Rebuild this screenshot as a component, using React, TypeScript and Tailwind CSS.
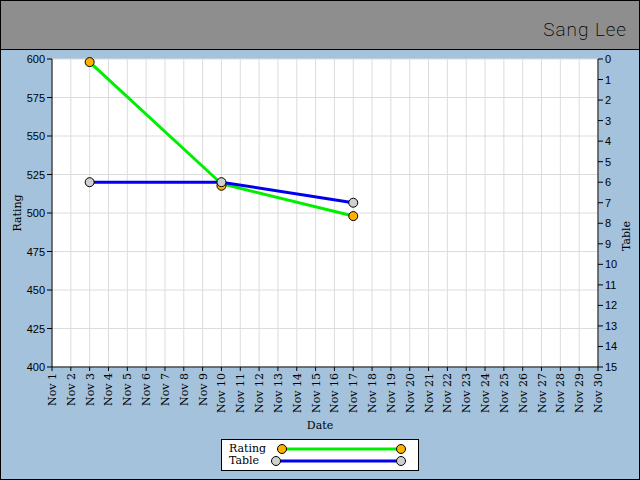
import React from "react";

const X0 = 52;
const X1 = 598;
const Y0 = 59;
const Y1 = 367;
const days = Array.from({ length: 30 }, (_, i) => i + 1);
const dx = (X1 - X0) / 29;
const xOf = (d: number) => X0 + (d - 1) * dx;
const yRating = (r: number) => Y0 + (600 - r) * ((Y1 - Y0) / 200);
const yTable = (t: number) => Y0 + t * ((Y1 - Y0) / 15);

const rating = [
  { d: 3, v: 598 },
  { d: 10, v: 519 },
  { d: 17, v: 498 },
];
const table = [
  { d: 3, v: 6 },
  { d: 10, v: 6 },
  { d: 17, v: 7 },
];

function Chart() {
  const ratingTicks = [600, 575, 550, 525, 500, 475, 450, 425, 400];
  const tableTicks = Array.from({ length: 16 }, (_, i) => i);
  return (
    <svg width={638} height={430} viewBox="1 50 638 430" className="block">
      <rect x={X0} y={Y0} width={X1 - X0} height={Y1 - Y0} fill="#fff" />
      {days.map((d) => (
        <line key={d} x1={xOf(d)} x2={xOf(d)} y1={Y0} y2={Y1} stroke="#dcdcdc" />
      ))}
      {ratingTicks.map((r) => (
        <line key={r} x1={X0} x2={X1} y1={yRating(r)} y2={yRating(r)} stroke="#dcdcdc" />
      ))}
      <line x1={X0} x2={X0} y1={Y0} y2={Y1} stroke="#000" />
      <line x1={X1} x2={X1} y1={Y0} y2={Y1} stroke="#000" />
      <line x1={X0} x2={X1} y1={Y1} y2={Y1} stroke="#000" />
      <g fontFamily="'Liberation Sans', sans-serif" fontSize={11} fill="#000">
        {ratingTicks.map((r) => (
          <g key={r}>
            <line x1={X0 - 5} x2={X0} y1={yRating(r)} y2={yRating(r)} stroke="#000" />
            <text x={X0 - 7} y={yRating(r) + 4} textAnchor="end">{r}</text>
          </g>
        ))}
        {tableTicks.map((t) => (
          <g key={t}>
            <line x1={X1} x2={X1 + 5} y1={yTable(t)} y2={yTable(t)} stroke="#000" />
            <text x={X1 + 7} y={yTable(t) + 4}>{t}</text>
          </g>
        ))}
      </g>
      <g fontFamily="'DejaVu Serif', serif" fontSize={11} fill="#000">
        {days.map((d) => (
          <g key={d}>
            <line x1={xOf(d)} x2={xOf(d)} y1={Y1} y2={Y1 + 4} stroke="#000" />
            <text
              transform={`translate(${xOf(d) + 4} ${Y1 + 6}) rotate(-90)`}
              textAnchor="end"
            >
              Nov {d}
            </text>
          </g>
        ))}
        <text x={320} y={429} textAnchor="middle">Date</text>
        <text transform="translate(21 213) rotate(-90)" textAnchor="middle">Rating</text>
        <text transform="translate(630 236) rotate(-90)" textAnchor="middle">Table</text>
      </g>
      <polyline
        points={rating.map((p) => `${xOf(p.d)},${yRating(p.v)}`).join(" ")}
        fill="none"
        stroke="#00ee00"
        strokeWidth={3}
      />
      <polyline
        points={table.map((p) => `${xOf(p.d)},${yTable(p.v)}`).join(" ")}
        fill="none"
        stroke="#0000ee"
        strokeWidth={3}
      />
      {rating.map((p) => (
        <circle key={p.d} cx={xOf(p.d)} cy={yRating(p.v) + (p.d === 10 ? 2 : 0)} r={4.5} fill="#ffb000" stroke="#000" />
      ))}
      {table.map((p) => (
        <circle key={p.d} cx={xOf(p.d)} cy={yTable(p.v)} r={4.5} fill="#d0d0d0" stroke="#000" />
      ))}
    </svg>
  );
}

function LegendLine({ color, fill, offset }: { color: string; fill: string; offset: number }) {
  return (
    <svg width={140} height={12} className="block">
      <line x1={offset} x2={132} y1={6} y2={6} stroke={color} strokeWidth={3} />
      <circle cx={offset} cy={6} r={4.5} fill={fill} stroke="#000" />
      <circle cx={132} cy={6} r={4.5} fill={fill} stroke="#000" />
    </svg>
  );
}

export default function App() {
  return (
    <div className="w-[640px] h-[480px] bg-[#a4c2dc] border border-black overflow-hidden relative">
      <div className="h-[49px] bg-[#8e8e8e] border-b border-black flex items-end justify-end pr-[12px] pb-[5px]">
        <span className="text-[19px] font-extralight text-black font-[Roboto,sans-serif] tracking-wider">
          Sang Lee
        </span>
      </div>
      <Chart />
      <div className="absolute left-[220px] top-[438px] w-[198px] h-[32px] bg-white border border-black flex flex-col justify-center pl-[7px] font-[DejaVu_Serif,serif] text-[11px] leading-[12px]">
        <div className="flex items-center">
          <span className="w-[40px]">Rating</span>
          <LegendLine color="#00ee00" fill="#ffb000" offset={13} />
        </div>
        <div className="flex items-center">
          <span className="w-[40px]">Table</span>
          <LegendLine color="#0000ee" fill="#d0d0d0" offset={7} />
        </div>
      </div>
    </div>
  );
}
